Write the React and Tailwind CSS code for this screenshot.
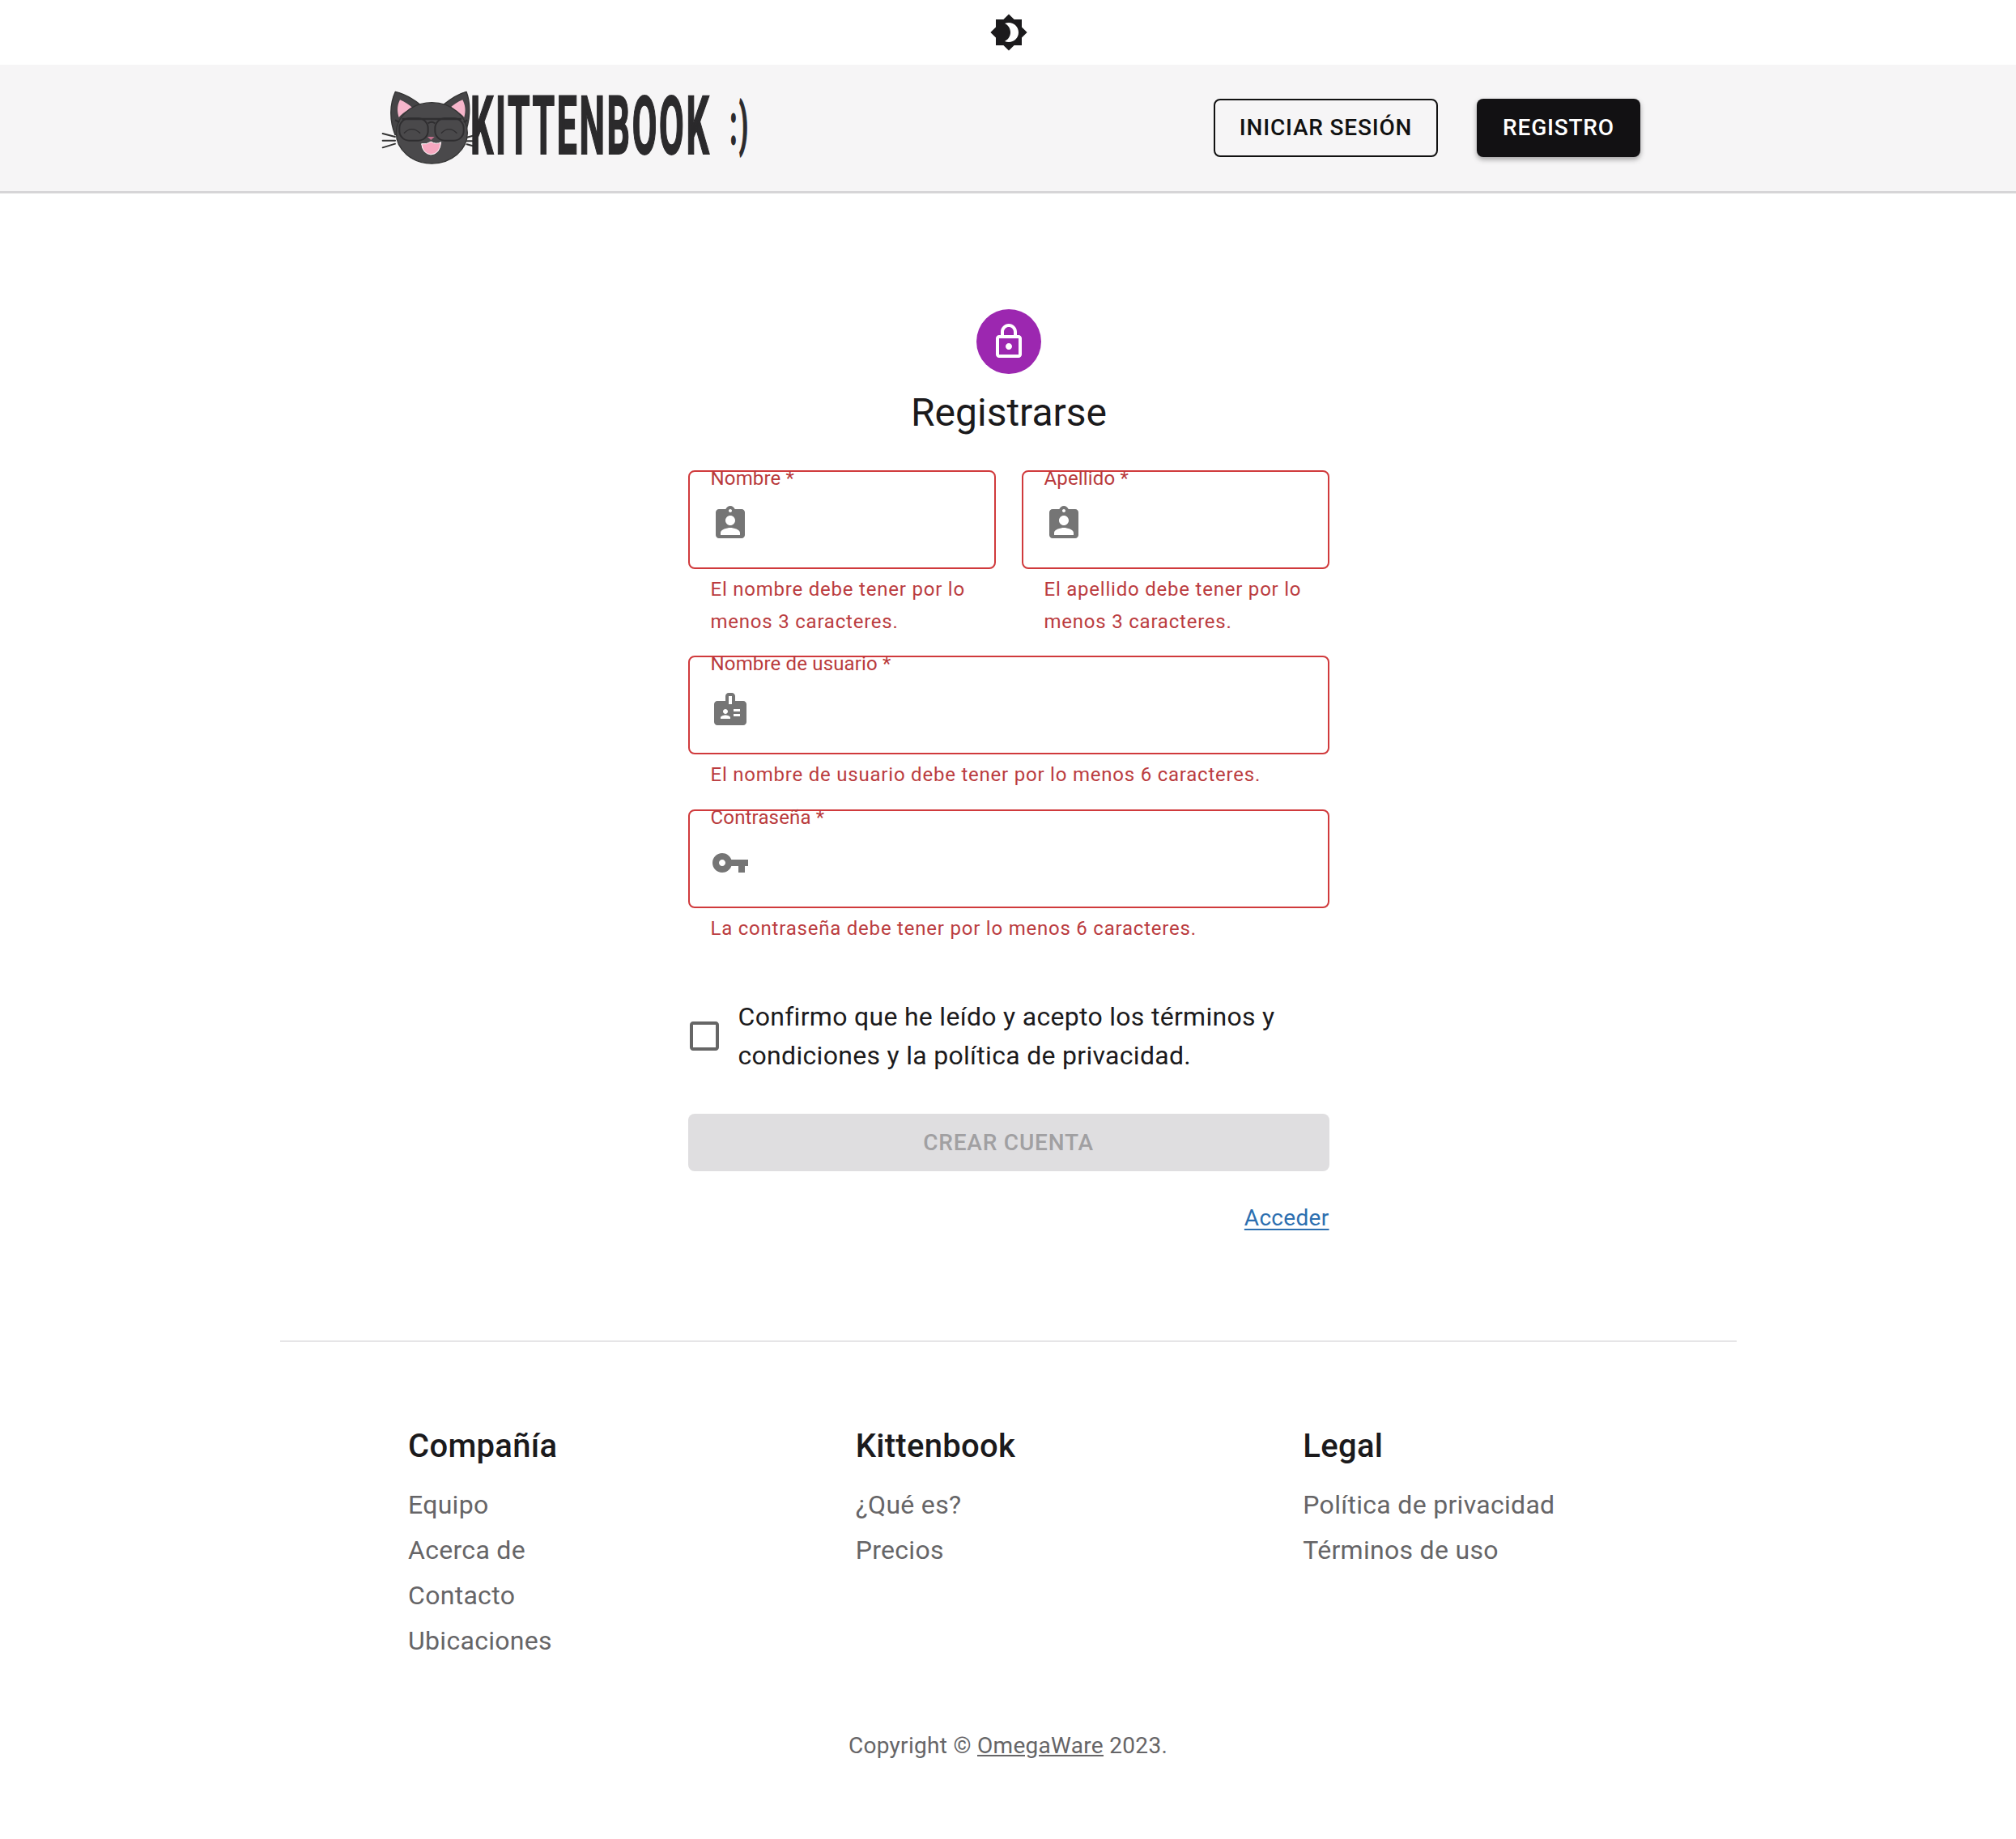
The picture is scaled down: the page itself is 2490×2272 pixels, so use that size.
const iconPaths = {
  theme: 'M20 8.69V4h-4.69L12 .69 8.69 4H4v4.69L.69 12 4 15.31V20h4.69L12 23.31 15.31 20H20v-4.69L23.31 12 20 8.69zM12 18c-.89 0-1.74-.2-2.5-.55C11.56 16.5 13 14.42 13 12s-1.44-4.5-3.5-5.45C10.26 6.2 11.11 6 12 6c3.31 0 6 2.69 6 6s-2.69 6-6 6z',
  lock: 'M18 8h-1V6c0-2.76-2.24-5-5-5S7 3.24 7 6v2H6c-1.1 0-2 .9-2 2v10c0 1.1.9 2 2 2h12c1.1 0 2-.9 2-2V10c0-1.1-.9-2-2-2zM9 6c0-1.66 1.34-3 3-3s3 1.34 3 3v2H9V6zm9 14H6V10h12v10zm-6-3c1.1 0 2-.9 2-2s-.9-2-2-2-2 .9-2 2 .9 2 2 2z',
  person: 'M19 3h-4.18C14.4 1.84 13.3 1 12 1c-1.3 0-2.4.84-2.82 2H5c-1.1 0-2 .9-2 2v14c0 1.1.9 2 2 2h14c1.1 0 2-.9 2-2V5c0-1.1-.9-2-2-2zm-7 0c.55 0 1 .45 1 1s-.45 1-1 1-1-.45-1-1 .45-1 1-1zm0 4c1.66 0 3 1.34 3 3s-1.34 3-3 3-3-1.34-3-3 1.34-3 3-3zm6 12H6v-1.4c0-2 4-3.1 6-3.1s6 1.1 6 3.1V19z',
  badge: 'M20 7h-5V4c0-1.1-.9-2-2-2h-2c-1.1 0-2 .9-2 2v3H4c-1.1 0-2 .9-2 2v11c0 1.1.9 2 2 2h16c1.1 0 2-.9 2-2V9c0-1.1-.9-2-2-2zM9 12c.83 0 1.5.67 1.5 1.5S9.83 15 9 15s-1.5-.67-1.5-1.5S8.17 12 9 12zm3 6H6v-.75c0-1 2-1.5 3-1.5s3 .5 3 1.5V18zm1-9h-2V4h2v5zm5 7.5h-4V15h4v1.5zm0-3h-4V12h4v1.5z',
  key: 'M12.65 10C11.83 7.67 9.61 6 7 6c-3.31 0-6 2.69-6 6s2.69 6 6 6c2.61 0 4.83-1.67 5.65-4H17v4h4v-4h2v-4H12.65zM7 14c-1.1 0-2-.9-2-2s.9-2 2-2 2 .9 2 2-.9 2-2 2z',
  checkbox: 'M19 5v14H5V5h14m0-2H5c-1.1 0-2 .9-2 2v14c0 1.1.9 2 2 2h14c1.1 0 2-.9 2-2V5c0-1.1-.9-2-2-2z',
};

const footerColumns = [
  { title: 'Compañía', links: ['Equipo', 'Acerca de', 'Contacto', 'Ubicaciones'] },
  { title: 'Kittenbook', links: ['¿Qué es?', 'Precios'] },
  { title: 'Legal', links: ['Política de privacidad', 'Términos de uso'] },
];

function Icon({ path, className }) {
  return (
    <svg viewBox="0 0 24 24" fill="currentColor" className={className}>
      <path d={iconPaths[path]} />
    </svg>
  );
}

function CatLogo() {
  return (
    <svg viewBox="0 0 375 360" className="w-[125px] h-[120px] shrink-0">
      {/* Whiskers */}
      <g stroke="#333" strokeWidth="6" strokeLinecap="round">
        <path d="M38 210 L84 222 M38 236 L84 236 M38 262 L84 248" />
        <path d="M350 224 L372 218 M350 238 L372 238 M350 250 L372 256" />
      </g>
      {/* Ears */}
      <path d="M84 215 C62 160 64 100 85 55 C115 62 150 80 180 105 L260 105 C285 85 320 62 348 55 C366 100 362 170 340 215 Z" fill="#454446" stroke="#333" strokeWidth="4" strokeLinejoin="round" />
      <path d="M98 150 C90 125 92 105 102 85 C120 92 138 105 152 118 C132 122 112 132 98 150 Z" fill="#f7b6cb" />
      <path d="M340 150 C347 125 344 105 334 85 C316 92 298 105 284 118 C304 122 326 132 340 150 Z" fill="#f7b6cb" />
      {/* Head */}
      <ellipse cx="220" cy="208" rx="132" ry="113" fill="#4a494b" stroke="#333" strokeWidth="4" />
      {/* Glasses */}
      <g fill="none" stroke="#2f2e30" strokeWidth="6">
        <rect x="100" y="154" width="106" height="82" rx="36" />
        <rect x="232" y="154" width="106" height="82" rx="36" />
        <path d="M206 172 Q219 162 232 172 M84 160 L100 168 M338 168 L352 160" />
        <path d="M110 156 L330 156" strokeWidth="8" />
      </g>
      {/* Eyes */}
      <g fill="none" stroke="#2f2e30" strokeWidth="4" strokeLinecap="round">
        <path d="M118 208 Q145 180 176 208" />
        <path d="M256 208 Q284 180 312 208" />
      </g>
      {/* Nose and mouth */}
      <path d="M204 222 L230 222 L217 234 Z" fill="#c4708d" />
      <path d="M182 248 Q200 252 217 240 Q235 252 254 242 Q250 286 216 288 Q186 284 182 248 Z" fill="#f7a8c0" stroke="#fff" strokeWidth="3" />
    </svg>
  );
}

function Field({ label, icon, error }) {
  return (
    <div>
      <div className="relative h-[122px] border-2 border-[#d03a3c] rounded-[8px] flex items-center pl-[26px] pt-[9px]">
        <span className="absolute left-[26px] -top-[8px] text-[24px] leading-[32px] tracking-[0.16px] text-[#b93a3c]">
          {label} *
        </span>
        <Icon path={icon} className="w-[48px] h-[48px]" />
      </div>
      <p className="mt-[5px] pl-[28px] text-[24px] leading-[40px] tracking-[0.78px] text-[#bb3c40]">
        {error}
      </p>
    </div>
  );
}

export default function App() {
  return (
    <div className="min-h-[2272px] bg-white font-['Roboto',sans-serif] text-[#1b1a1c]">
      {/* Theme switch */}
      <div className="h-[80px] flex items-center justify-center pl-[2px]">
        <Icon path="theme" className="w-[48px] h-[48px]" />
      </div>

      {/* Navbar */}
      <header className="h-[159px] bg-[#f6f5f6] border-b-[3px] border-[#d6d5d7]">
        <div className="ml-[460px] w-[1566px] h-full flex items-center justify-between">
          <div className="flex items-center -mt-[6px]">
            <CatLogo />
            <div className="w-[340px] -ml-[4px] pt-[12px]">
              <span className="inline-block origin-left scale-x-[0.445] whitespace-nowrap text-[100px] leading-[100px] tracking-[6px] font-bold text-[#2b2a2c] [-webkit-text-stroke:2px_#2b2a2c]">
                KITTENBOOK
                <span className="inline-block ml-[52px] -translate-y-[12px] text-[70px]">:)</span>
              </span>
            </div>
          </div>
          <div className="flex items-center gap-[48px]">
            <button className="h-[72px] w-[277px] border-2 border-[#111] rounded-[8px] text-[28px] font-medium tracking-[0.8px] text-[#111]">
              INICIAR SESIÓN
            </button>
            <button className="h-[72px] w-[202px] bg-[#121113] rounded-[8px] text-[28px] font-medium tracking-[0.8px] text-white shadow-[0_3px_6px_rgba(0,0,0,0.35)]">
              REGISTRO
            </button>
          </div>
        </div>
      </header>

      {/* Sign up form */}
      <main className="flex flex-col items-center pt-[143px]">
        <div className="ml-[2px] w-[80px] h-[80px] rounded-full bg-[#9c27b0] text-white flex items-center justify-center">
          <Icon path="lock" className="w-[48px] h-[48px]" />
        </div>
        <h1 className="ml-[2px] mt-[20px] text-[48px] leading-[56px] font-normal">Registrarse</h1>

        <form className="ml-[1px] mt-[43px] w-[792px] text-[#757575]">
          <div className="grid grid-cols-2 gap-x-[32px]">
            <Field label="Nombre" icon="person" error="El nombre debe tener por lo menos 3 caracteres." />
            <Field label="Apellido" icon="person" error="El apellido debe tener por lo menos 3 caracteres." />
          </div>
          <div className="mt-[22px]">
            <Field label="Nombre de usuario" icon="badge" error="El nombre de usuario debe tener por lo menos 6 caracteres." />
          </div>
          <div className="mt-[23px]">
            <Field label="Contraseña" icon="key" error="La contraseña debe tener por lo menos 6 caracteres." />
          </div>

          <label className="mt-[65px] -ml-[4px] flex items-center gap-[18px]">
            <Icon path="checkbox" className="w-[48px] h-[48px] shrink-0 text-[#666]" />
            <span className="text-[32px] leading-[48px] tracking-[0.3px] text-[#1b1a1c]">
              Confirmo que he leído y acepto los términos y condiciones y la política de privacidad.
            </span>
          </label>

          <button type="button" className="mt-[48px] w-full h-[71px] rounded-[8px] bg-[#dfdee0] text-[28px] font-medium tracking-[0.8px] text-[#a1a0a2]">
            CREAR CUENTA
          </button>

          <div className="mt-[38px] flex justify-end">
            <a className="text-[28px] leading-[40px] tracking-[0.3px] text-[#2c6fb0] underline underline-offset-[4px]">
              Acceder
            </a>
          </div>
        </form>
      </main>

      {/* Footer */}
      <footer>
        <div className="mt-[131px] mx-auto w-[1799px] border-t-2 border-[#e6e5e7]" />
        <div className="mt-[101px] ml-[504px] w-[1658px] grid grid-cols-3">
          {footerColumns.map((col) => (
            <div key={col.title}>
              <h2 className="text-[40px] leading-[56px] tracking-[0.3px] font-medium">{col.title}</h2>
              <ul className="mt-[20px] flex flex-col gap-[8px]">
                {col.links.map((link) => (
                  <li key={link} className="text-[32px] leading-[48px] tracking-[0.3px] text-[#666567]">
                    {link}
                  </li>
                ))}
              </ul>
            </div>
          ))}
        </div>
        <p className="mt-[86px] text-center text-[28px] leading-[40px] tracking-[0.3px] text-[#666567]">
          Copyright © <a className="underline">OmegaWare</a> 2023.
        </p>
      </footer>
    </div>
  );
}
